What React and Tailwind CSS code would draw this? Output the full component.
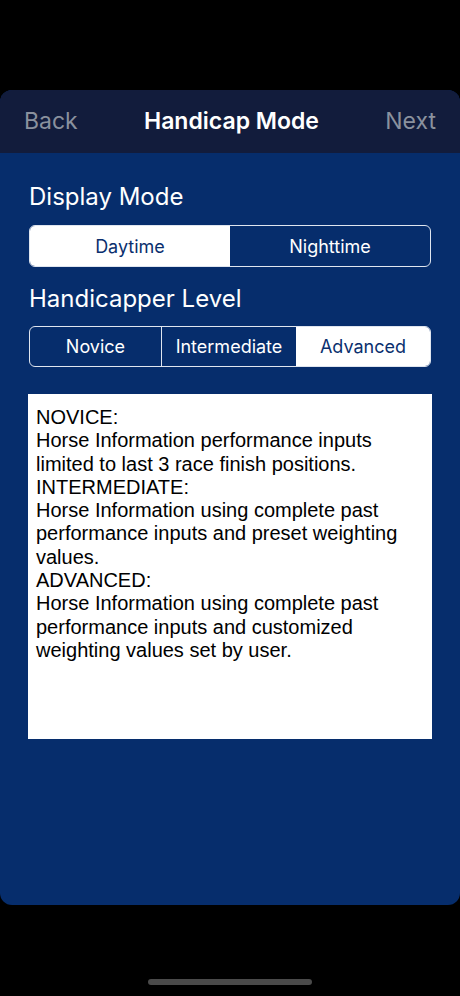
export default function App() {
  const ui = { fontFamily: 'Inter, "Noto Sans", sans-serif' };
  return (
    <div className="w-[460px] h-[996px] bg-black flex flex-col overflow-hidden" style={ui}>
      <div className="h-[90px] shrink-0" />
      <div className="h-[815px] shrink-0 rounded-[12px] overflow-hidden bg-[#062d6c] flex flex-col">
        <div className="h-[63px] shrink-0 bg-[#121c3c] flex items-center justify-between px-[24px]">
          <span className="text-[23px] text-[#8a919e]">Back</span>
          <span className="text-[23px] font-semibold text-white">Handicap Mode</span>
          <span className="text-[23px] text-[#8a919e]">Next</span>
        </div>
        <div className="px-[29px] flex flex-col">
          <div className="mt-[28px] h-[32px] leading-[32px] text-[24px] text-white">Display Mode</div>
          <div className="mt-[12px] h-[42px] flex rounded-[6px] border border-[#dfe5ef] overflow-hidden text-[18px]">
            <div className="flex-1 bg-white text-[#0a2f6e] flex items-center justify-center">Daytime</div>
            <div className="flex-1 text-white flex items-center justify-center">Nighttime</div>
          </div>
          <div className="mt-[16px] h-[32px] leading-[32px] text-[24px] text-white">Handicapper Level</div>
          <div className="mt-[11px] h-[41px] flex rounded-[6px] border border-[#dfe5ef] overflow-hidden text-[18px]">
            <div className="w-[132px] text-white flex items-center justify-center border-r border-[#dfe5ef]">Novice</div>
            <div className="w-[134px] text-white flex items-center justify-center">Intermediate</div>
            <div className="flex-1 bg-white text-[#0a2f6e] flex items-center justify-center">Advanced</div>
          </div>
          <div
            className="mt-[27px] -mx-px h-[345px] bg-white pt-[12px] pl-[8px] pr-[6px] text-[20px] leading-[23.3px] text-black"
            style={{ fontFamily: '"Liberation Sans", Arial, sans-serif' }}
          >
            <div>NOVICE:</div>
            <div>Horse Information performance inputs limited to last 3 race finish positions.</div>
            <div>INTERMEDIATE:</div>
            <div>Horse Information using complete past performance inputs and preset weighting values.</div>
            <div>ADVANCED:</div>
            <div>Horse Information using complete past performance inputs and customized weighting values set by user.</div>
          </div>
        </div>
      </div>
      <div className="flex-1 flex items-end justify-center pb-[11px]">
        <div className="w-[164px] h-[6px] rounded-full bg-[#4a4a4a]" />
      </div>
    </div>
  );
}
